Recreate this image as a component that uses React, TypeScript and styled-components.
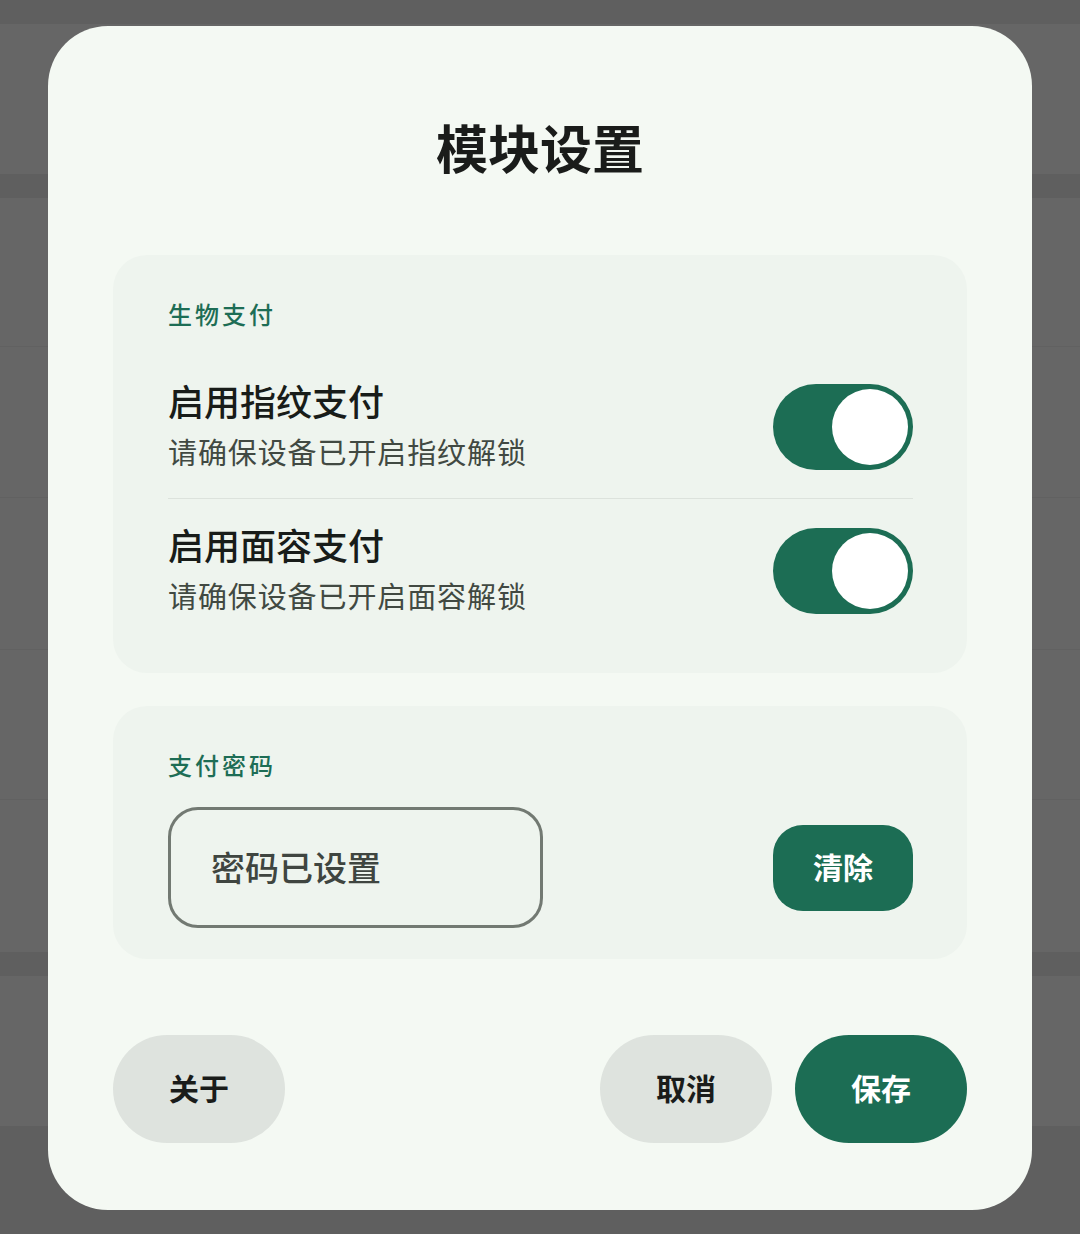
import styled, { createGlobalStyle } from "styled-components";

const GlobalStyle = createGlobalStyle`
  html, body {
    margin: 0;
    padding: 0;
    background: #666666;
  }
  * {
    box-sizing: border-box;
  }
  body {
    font-family: "Noto Sans CJK SC", "Noto Sans", sans-serif;
  }
`;

interface ToggleRow {
  id: string;
  title: string;
  desc: string;
  on: boolean;
}

const rows: ToggleRow[] = [
  { id: "finger", title: "启用指纹支付", desc: "请确保设备已开启指纹解锁", on: true },
  { id: "face", title: "启用面容支付", desc: "请确保设备已开启面容解锁", on: true },
];

const App = () => {
  return (
    <>
      <GlobalStyle />
      <Backdrop>
        <BgBand $h={24} $dark />
        <BgBand $h={150} />
        <BgBand $h={24} $dark />
        <BgRow $h={149} />
        <BgRow $h={151} />
        <BgRow $h={152} />
        <BgRow $h={150} />
        <BgBand $h={152} />
        <BgBand $h={24} $dark />
        <BgBand $h={150} />
        <BgBand $h={108} $dark />
      </Backdrop>
      <Overlay>
        <Dialog>
          <Title>模块设置</Title>
          <Section>
            <SectionLabel>生物支付</SectionLabel>
            {rows.map((r, i) => (
              <Row key={r.id} $divider={i < rows.length - 1}>
                <RowText>
                  <RowTitle>{r.title}</RowTitle>
                  <RowDesc>{r.desc}</RowDesc>
                </RowText>
                <Switch $on={r.on}>
                  <Thumb />
                </Switch>
              </Row>
            ))}
          </Section>
          <Section $gap>
            <SectionLabel>支付密码</SectionLabel>
            <PasswordRow>
              <PasswordBox>密码已设置</PasswordBox>
              <ClearButton>清除</ClearButton>
            </PasswordRow>
          </Section>
          <Footer>
            <PillButton $variant="tonal">关于</PillButton>
            <FooterRight>
              <PillButton $variant="tonal">取消</PillButton>
              <PillButton $variant="filled">保存</PillButton>
            </FooterRight>
          </Footer>
        </Dialog>
      </Overlay>
    </>
  );
};

export default App;

const Backdrop = styled.div`
  display: flex;
  flex-direction: column;
  width: 1080px;
  height: 1234px;
  overflow: hidden;
  background: #5f5f5f;
`;

const BgBand = styled.div<{ $h: number; $dark?: boolean }>`
  height: ${(p) => p.$h}px;
  flex-shrink: 0;
  background: ${(p) => (p.$dark ? "#5f5f5f" : "#666666")};
`;

const BgRow = styled.div<{ $h: number }>`
  height: ${(p) => p.$h}px;
  flex-shrink: 0;
  background: #666666;
  border-bottom: 1px solid #616161;
`;

const Overlay = styled.div`
  position: fixed;
  inset: 0;
  display: flex;
  align-items: center;
  justify-content: center;
  padding-top: 2px;
`;

const Dialog = styled.div`
  width: 984px;
  height: 1184px;
  background: #f4f9f3;
  border-radius: 60px;
  padding: 89px 65px 66px;
  display: flex;
  flex-direction: column;
`;

const Title = styled.h1`
  margin: 0 0 76px;
  text-align: center;
  font-size: 52px;
  line-height: 64px;
  font-weight: 700;
  color: #1a1c1a;
`;

const Section = styled.div<{ $gap?: boolean }>`
  background: #eef4ee;
  border-radius: 34px;
  padding: 44px 54px 31px 55px;
  margin-top: ${(p) => (p.$gap ? "33px" : "0")};
  display: flex;
  flex-direction: column;
  flex-shrink: 0;
`;

const SectionLabel = styled.div`
  font-size: 24px;
  line-height: 30px;
  letter-spacing: 3px;
  font-weight: 500;
  color: #1d6d55;
  margin-bottom: 26px;
`;

const Row = styled.div<{ $divider: boolean }>`
  display: flex;
  align-items: center;
  justify-content: space-between;
  padding: 23px 0;
  border-bottom: ${(p) => (p.$divider ? "1px solid #dce2dc" : "none")};
`;

const RowText = styled.div`
  display: flex;
  flex-direction: column;
  gap: 10px;
  padding-bottom: 5px;
`;

const RowTitle = styled.div`
  font-size: 36px;
  line-height: 44px;
  font-weight: 500;
  color: #181c19;
`;

const RowDesc = styled.div`
  font-size: 29px;
  line-height: 38px;
  color: #414942;
  letter-spacing: 0.9px;
`;

const Switch = styled.div<{ $on: boolean }>`
  width: 140px;
  height: 86px;
  border-radius: 43px;
  background: ${(p) => (p.$on ? "#1c6d54" : "#dce5dc")};
  display: flex;
  align-items: center;
  justify-content: ${(p) => (p.$on ? "flex-end" : "flex-start")};
  padding: 0 5px;
  flex-shrink: 0;
`;

const Thumb = styled.div`
  width: 76px;
  height: 76px;
  border-radius: 50%;
  background: #ffffff;
`;

const PasswordRow = styled.div`
  display: flex;
  align-items: center;
  justify-content: space-between;
  margin-top: 1px;
`;

const PasswordBox = styled.div`
  width: 375px;
  height: 121px;
  border: 3px solid #727972;
  border-radius: 30px;
  padding: 0 0 3px 40px;
  display: flex;
  align-items: center;
  font-size: 34px;
  font-weight: 500;
  color: #3f4540;
`;

const ClearButton = styled.button`
  width: 140px;
  height: 86px;
  border: none;
  border-radius: 30px;
  background: #1c6d54;
  color: #ffffff;
  font-family: inherit;
  font-size: 30px;
  font-weight: 700;
  padding: 0 0 4px;
`;

const Footer = styled.div`
  margin-top: 76px;
  display: flex;
  align-items: center;
  justify-content: space-between;
`;

const FooterRight = styled.div`
  display: flex;
  gap: 23px;
`;

const PillButton = styled.button<{ $variant: "tonal" | "filled" }>`
  width: 172px;
  height: 108px;
  border: none;
  border-radius: 54px;
  padding: 0 0 4px;
  font-family: inherit;
  font-size: 30px;
  font-weight: 700;
  background: ${(p) => (p.$variant === "filled" ? "#1c6d54" : "#dee3de")};
  color: ${(p) => (p.$variant === "filled" ? "#ffffff" : "#1a1c1a")};
`;
